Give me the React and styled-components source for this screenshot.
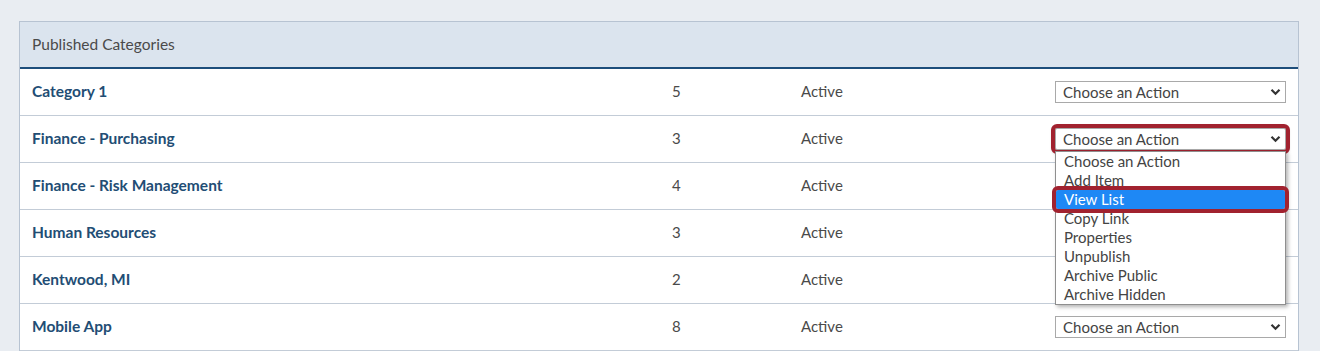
import React from 'react';
import styled, { createGlobalStyle } from 'styled-components';

const GlobalStyle = createGlobalStyle`
  html, body {
    margin: 0;
    padding: 0;
    background: #e9edf2;
  }
  body {
    padding: 21px 21px 0 19px;
    font-family: Lato, "Open Sans", Arial, sans-serif;
    overflow: hidden;
  }
`;

const categories = [
  { name: 'Category 1', count: 5, status: 'Active' },
  { name: 'Finance - Purchasing', count: 3, status: 'Active', open: true },
  { name: 'Finance - Risk Management', count: 4, status: 'Active' },
  { name: 'Human Resources', count: 3, status: 'Active' },
  { name: 'Kentwood, MI', count: 2, status: 'Active' },
  { name: 'Mobile App', count: 8, status: 'Active' },
];

const actions = [
  'Choose an Action',
  'Add Item',
  'View List',
  'Copy Link',
  'Properties',
  'Unpublish',
  'Archive Public',
  'Archive Hidden',
];

const Panel = styled.div`
  background: #fff;
  border: 1px solid #b7c3d2;
  border-bottom: none;
`;

const PanelHeader = styled.div`
  height: 47px;
  display: flex;
  align-items: center;
  padding: 0 12px 2px;
  box-sizing: border-box;
  background: #dbe4ee;
  border-bottom: 2px solid #1d4e7b;
  color: #4a4a4a;
  font-size: 15.5px;
`;

const Row = styled.div`
  display: grid;
  grid-template-columns: 1fr 129px 254px 231px;
  align-items: center;
  height: 47px;
  box-sizing: border-box;
  padding: 0 12px 2px;
  border-bottom: 1px solid #c3ccd7;
  font-size: 15px;
`;

const Name = styled.div`
  color: #224d74;
  font-size: 15.5px;
  font-weight: 700;
`;

const Cell = styled.div`
  color: #4a4a4a;
`;

const SelectWrap = styled.div`
  position: relative;
  margin-top: 2px;
`;

const SelectBox = styled.div`
  height: 22px;
  box-sizing: border-box;
  border: 1px solid #a9a9a9;
  background: #fff;
  display: flex;
  align-items: center;
  justify-content: space-between;
  padding: 0 4px 1px 7px;
  color: #444;
  font-size: 15px;
  border-radius: ${p => (p.$marked ? '2px' : '0')};
  outline: ${p => (p.$marked ? '4px solid #a1222f' : 'none')};
  box-shadow: ${p => (p.$marked ? '0 1px 3px 3px rgba(0,0,0,0.18)' : 'none')};
`;

const Menu = styled.ul`
  position: absolute;
  top: 23px;
  left: 0;
  width: 231px;
  box-sizing: border-box;
  margin: 0;
  padding: 0;
  list-style: none;
  background: #fff;
  border: 1px solid #8f8f8f;
  box-shadow: 2px 2px 4px rgba(0, 0, 0, 0.3);
  z-index: 5;
`;

const MenuItem = styled.li`
  height: 19px;
  line-height: 18px;
  padding: 0 8px 1px;
  box-sizing: border-box;
  font-size: 15px;
  color: ${p => (p.$active ? '#fff' : '#444')};
  background: ${p => (p.$active ? '#1e88f5' : 'transparent')};
  outline: ${p => (p.$active ? '4px solid #a1222f' : 'none')};
  border-radius: ${p => (p.$active ? '2px' : '0')};
  position: relative;
`;

const Chevron = () => (
  <svg width="11" height="8" viewBox="0 0 11 8">
    <path d="M1.5 1.8 L5.5 5.8 L9.5 1.8" fill="none" stroke="#333" strokeWidth="2.2" />
  </svg>
);

const ActionSelect = ({ open }) => (
  <SelectWrap>
    <SelectBox $marked={open}>
      <span>Choose an Action</span>
      <Chevron />
    </SelectBox>
    {open && (
      <Menu>
        {actions.map(a => (
          <MenuItem key={a} $active={a === 'View List'}>{a}</MenuItem>
        ))}
      </Menu>
    )}
  </SelectWrap>
);

export default function App() {
  return (
    <>
      <GlobalStyle />
      <Panel>
        <PanelHeader>Published Categories</PanelHeader>
        {categories.map(c => (
          <Row key={c.name}>
            <Name>{c.name}</Name>
            <Cell>{c.count}</Cell>
            <Cell>{c.status}</Cell>
            <ActionSelect open={c.open} />
          </Row>
        ))}
      </Panel>
    </>
  );
}
